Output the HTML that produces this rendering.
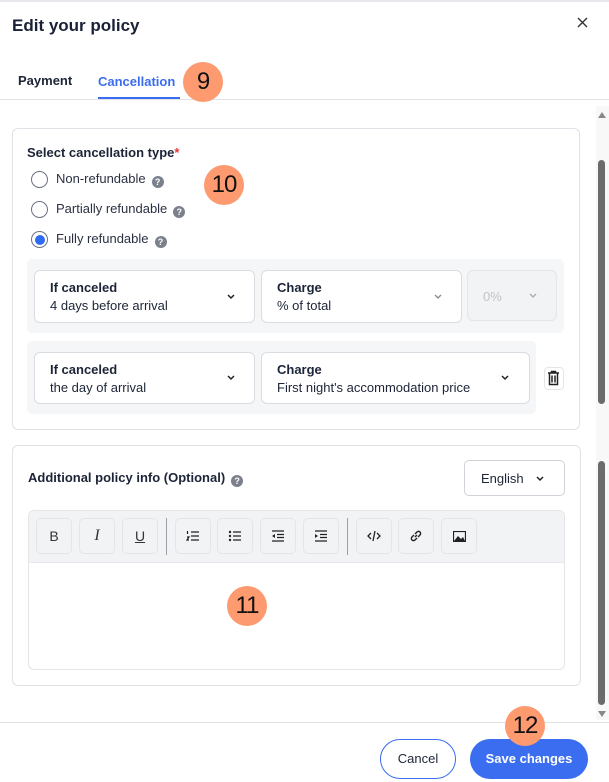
<!DOCTYPE html><html><head><style>
*{box-sizing:border-box;margin:0;padding:0}
body{width:609px;height:782px;background:#fff;font-family:"Liberation Sans",sans-serif;color:#1c2437;position:relative;overflow:hidden}
.a{position:absolute}
.badge{position:absolute;width:40px;height:40px;border-radius:50%;background:#fe9a70;color:#111;font-size:24px;display:flex;align-items:center;justify-content:center;letter-spacing:-1px}
.card{position:absolute;border:1px solid #dfe2e6;border-radius:6px;background:#fff}
.radio{position:absolute;left:31px;width:17px;height:17px;border:1.3px solid #6b7280;border-radius:50%}
.lbl{position:absolute;left:56px;font-size:13px;color:#2b3142}
.q{display:inline-block;width:12px;height:12px;border-radius:50%;background:#7b818c;color:#fff;font-size:9px;font-weight:bold;text-align:center;line-height:12px;margin-left:6px;vertical-align:-2px}
.sel{position:absolute;border:1px solid #d9dce1;border-radius:6px;background:#fff;padding:8px 0 0 15px;font-size:13px;line-height:18px}
.sel b{display:block;font-weight:bold;color:#1c2437}
.chev{position:absolute;right:18px;top:50%;margin-top:-5px}
.tb{position:absolute;top:518px;width:36px;height:36px;border:1px solid #e3e5e8;border-radius:5px;background:#f2f3f5;display:flex;align-items:center;justify-content:center;font-size:14px;color:#333}
</style></head><body>
<div class="a" style="left:0;top:0;width:609px;height:2px;background:#e6e8eb"></div>
<div class="a" style="left:12px;top:16px;font-size:17px;font-weight:bold;color:#1a2136">Edit your policy</div>
<svg class="a" style="left:577px;top:17px" width="11" height="11" viewBox="0 0 11 11"><path d="M1 1L10 10M10 1L1 10" stroke="#333" stroke-width="1.4"/></svg>
<div class="a" style="left:18px;top:73px;font-size:13px;font-weight:bold;color:#1c2437">Payment</div>
<div class="a" style="left:98px;top:74px;font-size:13px;font-weight:bold;color:#3b6df0">Cancellation</div>
<div class="a" style="left:98px;top:97px;width:82px;height:2px;background:#3b6df0"></div>
<div class="a" style="left:0;top:99px;width:609px;height:1px;background:#dfe2e6"></div>
<div class="badge" style="left:183px;top:62px">9</div>
<div class="a" style="left:596px;top:106px;width:13px;height:614px;background:#f8f8f8"></div>
<svg class="a" style="left:597px;top:111px" width="10" height="8"><path d="M1 7L5 1L9 7Z" fill="#888"/></svg>
<svg class="a" style="left:597px;top:710px" width="10" height="8"><path d="M1 1L5 7L9 1Z" fill="#888"/></svg>
<div class="a" style="left:598px;top:160px;width:7px;height:244px;border-radius:4px;background:#6b6b6b"></div>
<div class="a" style="left:598px;top:461px;width:7px;height:244px;border-radius:4px;background:#6b6b6b"></div>
<div class="card" style="left:12px;top:128px;width:568px;height:302px"></div>
<div class="a" style="left:27px;top:145px;font-size:13px;font-weight:bold;color:#1c2437">Select cancellation type<span style="color:#e53935">*</span></div>
<div class="radio" style="top:171px"></div><div class="lbl" style="top:171px">Non-refundable<span class="q">?</span></div>
<div class="radio" style="top:201px"></div><div class="lbl" style="top:201px">Partially refundable<span class="q">?</span></div>
<div class="radio" style="top:231px;padding:2.5px"><div style="width:10px;height:10px;border-radius:50%;background:#2f6bf2"></div></div><div class="lbl" style="top:231px">Fully refundable<span class="q">?</span></div>
<div class="badge" style="left:204px;top:165px">10</div>
<div class="a" style="left:27px;top:259px;width:537px;height:74px;background:#f5f6f8;border-radius:5px"></div>
<div class="sel" style="left:34px;top:270px;width:221px;height:53px"><b>If canceled</b>4 days before arrival<svg class="chev" width="10" height="10"><path d="M2 3L5 6L8 3" stroke="#222" stroke-width="1.5" fill="none"/></svg></div>
<div class="sel" style="left:261px;top:270px;width:201px;height:53px"><b>Charge</b>% of total<svg class="chev" width="10" height="10"><path d="M2 3L5 6L8 3" stroke="#888" stroke-width="1.3" fill="none"/></svg></div>
<div class="sel" style="left:467px;top:270px;width:90px;height:51px;background:#f2f3f5;border-color:#e3e5e8;color:#bfc3c9;padding-top:17px">0%<svg class="chev" width="10" height="10"><path d="M2 3L5 6L8 3" stroke="#aaa" stroke-width="1.3" fill="none"/></svg></div>
<div class="a" style="left:27px;top:341px;width:509px;height:73px;background:#f5f6f8;border-radius:5px"></div>
<div class="sel" style="left:34px;top:352px;width:221px;height:52px"><b>If canceled</b>the day of arrival<svg class="chev" width="10" height="10"><path d="M2 3L5 6L8 3" stroke="#222" stroke-width="1.5" fill="none"/></svg></div>
<div class="sel" style="left:261px;top:352px;width:269px;height:52px"><b>Charge</b>First night's accommodation price<svg class="chev" style="right:19px" width="10" height="10"><path d="M2 3L5 6L8 3" stroke="#222" stroke-width="1.5" fill="none"/></svg></div>
<div class="a" style="left:544px;top:367px;width:20px;height:23px;border:1px solid #e3e5e8;border-radius:4px"></div>
<svg class="a" style="left:547px;top:370px" width="13" height="16" viewBox="0 0 13 16"><path d="M1 3H12M4.5 3V1.5H8.5V3M2.5 3V14.5H10.5V3M5 5.5V12.5M8 5.5V12.5" stroke="#222" stroke-width="1.5" fill="none"/></svg>
<div class="card" style="left:12px;top:445px;width:569px;height:241px"></div>
<div class="a" style="left:28px;top:470px;font-size:13px;font-weight:bold;color:#1c2437">Additional policy info (Optional)<span class="q">?</span></div>
<div class="a" style="left:464px;top:460px;width:101px;height:36px;border:1px solid #cfd3d9;border-radius:5px;font-size:13px;padding:10px 0 0 16px">English<svg class="a" style="left:70px;top:13px" width="10" height="10"><path d="M2 3L5 6L8 3" stroke="#222" stroke-width="1.5" fill="none"/></svg></div>
<div class="a" style="left:28px;top:510px;width:537px;height:160px;border:1px solid #e3e5e8;border-radius:6px;overflow:hidden"><div style="height:52px;background:#f2f3f5;border-bottom:1px solid #e6e8eb"></div></div>
<div class="tb" style="left:36px">B</div>
<div class="tb" style="left:79px;font-family:'Liberation Serif';font-style:italic;font-size:16px">I</div>
<div class="tb" style="left:122px;text-decoration:underline">U</div>
<div class="a" style="left:166px;top:518px;width:1px;height:37px;background:#9aa0a8"></div>
<div class="tb" style="left:175px"><svg width="14" height="12"><path d="M5 2H13M5 6H13M5 10H13M1.5 1V4M1 7H3L1 10H3" stroke="#222" stroke-width="1.2" fill="none"/></svg></div>
<div class="tb" style="left:217px"><svg width="14" height="12"><path d="M5 2H13M5 6H13M5 10H13" stroke="#222" stroke-width="1.2"/><circle cx="2" cy="2" r="1.2" fill="#222"/><circle cx="2" cy="6" r="1.2" fill="#222"/><circle cx="2" cy="10" r="1.2" fill="#222"/></svg></div>
<div class="tb" style="left:260px"><svg width="14" height="12"><path d="M1 1H13M6 4.5H13M6 7.5H13M1 11H13" stroke="#222" stroke-width="1.2"/><path d="M4 4L1 6L4 8Z" fill="#222"/></svg></div>
<div class="tb" style="left:303px"><svg width="14" height="12"><path d="M1 1H13M6 4.5H13M6 7.5H13M1 11H13" stroke="#222" stroke-width="1.2"/><path d="M1 4L4 6L1 8Z" fill="#222"/></svg></div>
<div class="a" style="left:347px;top:518px;width:1px;height:37px;background:#9aa0a8"></div>
<div class="tb" style="left:356px"><svg width="14" height="12"><path d="M4 3L1 6L4 9M10 3L13 6L10 9M8 1L6 11" stroke="#222" stroke-width="1.3" fill="none"/></svg></div>
<div class="tb" style="left:398px"><svg width="14" height="14"><path d="M6 8L8 6M5 6L3 8A2 2 0 0 0 6 11L8 9M9 8L11 6A2 2 0 0 0 8 3L6 5" stroke="#222" stroke-width="1.4" fill="none"/></svg></div>
<div class="tb" style="left:441px"><svg width="13" height="11"><rect x="0.5" y="0.5" width="12" height="10" fill="none" stroke="#222" stroke-width="1.2"/><path d="M1 10L5 5L8 8L10 6L12 10Z" fill="#222"/></svg></div>
<div class="badge" style="left:227px;top:586px">11</div>
<div class="a" style="left:0;top:722px;width:609px;height:1px;background:#dfe2e6"></div>
<div class="a" style="left:380px;top:739px;width:76px;height:40px;border:1px solid #3b6df0;border-radius:20px;font-size:13px;text-align:center;line-height:38px;color:#1c2437">Cancel</div>
<div class="a" style="left:470px;top:739px;width:118px;height:40px;background:#3a6df0;border-radius:20px;font-size:13px;font-weight:bold;color:#fff;text-align:center;line-height:40px">Save changes</div>
<div class="badge" style="left:505px;top:706px">12</div>
</body></html>
